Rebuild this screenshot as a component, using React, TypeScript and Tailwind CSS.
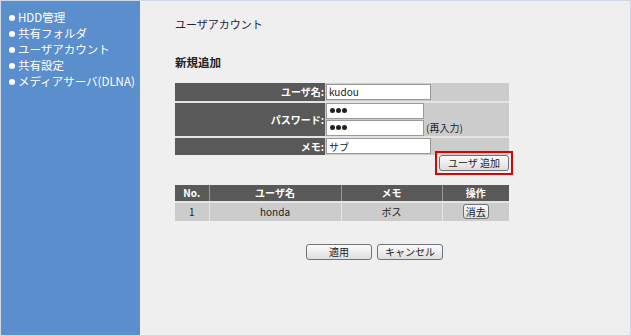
const font = { fontFamily: '"Noto Sans CJK JP", "Noto Sans", sans-serif' }

const nav = ["HDD管理", "共有フォルダ", "ユーザアカウント", "共有設定", "メディアサーバ(DLNA)"]

function Btn({ children, className = "" }: { children: React.ReactNode; className?: string }) {
  return (
    <button
      className={`flex items-center justify-center rounded-[3px] border border-[#6f7478] bg-gradient-to-b from-[#fbfbfb] to-[#dedede] text-[10px] leading-none text-[#222] ${className}`}
    >
      {children}
    </button>
  )
}

function Field({ value, w }: { value: string; w: string }) {
  return (
    <div className={`flex h-[16px] items-center border border-[#9a9a9a] bg-white pl-[2px] text-[10px] text-[#222] ${w}`}>
      {value}
    </div>
  )
}

function Secret({ w }: { w: string }) {
  return (
    <div className={`flex h-[16px] items-center gap-[1px] border border-[#9a9a9a] bg-white pl-[3px] ${w}`}>
      <span className="h-[5px] w-[5px] rounded-full bg-[#222]" />
      <span className="h-[5px] w-[5px] rounded-full bg-[#222]" />
      <span className="h-[5px] w-[5px] rounded-full bg-[#222]" />
    </div>
  )
}

export default function App() {
  return (
    <div className="flex h-[336px] w-[631px] border border-[#cfd8e2] bg-[#efefef]" style={font}>
      <aside className="flex w-[139px] flex-col bg-[#5b8ecc] pl-[8px] pt-[9px]">
        {nav.map((n) => (
          <div key={n} className="flex h-[16px] items-center gap-[3px] text-[11.5px] leading-none text-white">
            <span className="h-[6px] w-[6px] rounded-full bg-white" />
            <span>{n}</span>
          </div>
        ))}
      </aside>

      <main className="flex flex-1 flex-col pl-[35px] pt-[18px]">
        <h1 className="text-[11px] leading-none text-[#222244]">ユーザアカウント</h1>
        <h2 className="mt-[27px] text-[11.5px] font-bold leading-none text-[#222]">新規追加</h2>

        <div className="mt-[14px] grid w-[334px] grid-cols-[150px_184px] gap-y-[2px] bg-[#e4e4e4]">
          <div className="flex h-[18px] items-center justify-end bg-[#595959] pr-[1px] text-[10px] font-bold text-white">ユーザ名:</div>
          <div className="flex items-center bg-[#cccccc] pl-px">
            <Field value="kudou" w="w-[105px]" />
          </div>

          <div className="flex h-[33px] items-center justify-end bg-[#595959] pr-[1px] text-[10px] font-bold text-white">パスワード:</div>
          <div className="flex flex-col justify-center gap-px bg-[#cccccc] pl-px">
            <Secret w="w-[98px]" />
            <div className="flex items-center gap-[2px]">
              <Secret w="w-[98px]" />
              <span className="text-[10px] text-[#222]">(再入力)</span>
            </div>
          </div>

          <div className="flex h-[17px] items-center justify-end bg-[#595959] pr-[1px] text-[10px] font-bold text-white">メモ:</div>
          <div className="flex items-center bg-[#cccccc] pl-px">
            <Field value="サブ" w="w-[105px]" />
          </div>
        </div>

        <div className="flex w-[338px] justify-end">
          <div className="mt-[-4px] border-2 border-[#e00000] p-[2px]">
            <Btn className="h-[16px] w-[70px]">ユーザ 追加</Btn>
          </div>
        </div>

        <table className="mt-[10px] w-[334px] border-collapse text-[10px]">
          <thead>
            <tr className="h-[17px] bg-[#595959] font-bold text-white">
              <th className="w-[34px] border-r border-[#9a9a9a] font-bold">No.</th>
              <th className="w-[132px] border-r border-[#9a9a9a] font-bold">ユーザ名</th>
              <th className="w-[101px] border-r border-[#9a9a9a] font-bold">メモ</th>
              <th className="font-bold">操作</th>
            </tr>
          </thead>
          <tbody>
            <tr className="h-[19px] border-t-2 border-[#e4e4e4] bg-[#cccccc] text-center text-[#222]">
              <td className="border-r border-[#e4e4e4]">1</td>
              <td className="border-r border-[#e4e4e4]">honda</td>
              <td className="border-r border-[#e4e4e4]">ボス</td>
              <td>
                <div className="flex justify-center">
                  <Btn className="h-[15px] w-[26px]">消去</Btn>
                </div>
              </td>
            </tr>
          </tbody>
        </table>

        <div className="mt-[23px] flex gap-[5px] pl-[131px]">
          <Btn className="h-[16px] w-[66px]">適用</Btn>
          <Btn className="h-[16px] w-[66px]">キャンセル</Btn>
        </div>
      </main>
    </div>
  )
}
